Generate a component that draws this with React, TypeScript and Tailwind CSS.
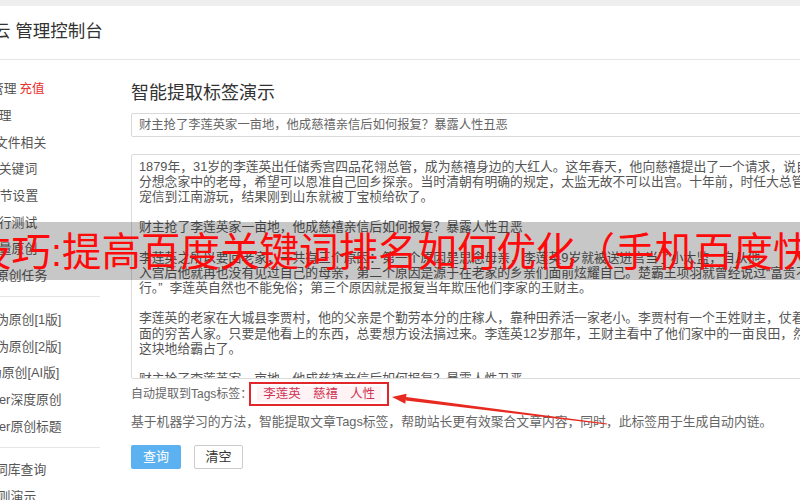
import React from 'react'

// 左侧菜单：文字左端被页面滚动裁掉，用负边距还原
const menuTop = [
  { text: '管理', ml: '-ml-[9px]', badge: '充值' },
  { text: '管理', ml: '-ml-[14px]' },
  { text: '文件相关', ml: '-ml-[5px]' },
  { text: '尾关键词', ml: '-ml-[14px]' },
  { text: '细节设置', ml: '-ml-[13px]' },
  { text: '运行测试', ml: '-ml-[14px]' },
  { text: '批量原创', ml: '-ml-[14px]' },
  { text: '原创任务', ml: '-ml-[4px]' },
]

const menuMid = [
  { text: '伪原创[1版]', ml: '-ml-[4px]' },
  { text: '伪原创[2版]', ml: '-ml-[4px]' },
  { text: '伪原创[AI版]', ml: '-ml-[11px]' },
  { text: 'er深度原创', ml: '-ml-[1px]' },
  { text: 'er原创标题', ml: '-ml-[1px]' },
]

const menuBottom = [
  { text: '词库查询', ml: '-ml-[5px]' },
  { text: '规则演示', ml: '-ml-[15px]' },
]

const article = [
  '1879年，31岁的李莲英出任储秀宫四品花翎总管，成为慈禧身边的大红人。这年春天，他向慈禧提出了一个请求，说自己十',
  '分想念家中的老母，希望可以恩准自己回乡探亲。当时清朝有明确的规定，太监无故不可以出宫。十年前，时任大总管安德海仗着慈禧的',
  '宠信到江南游玩，结果刚到山东就被丁宝桢给砍了。',
  '',
  '财主抢了李莲英家一亩地，他成慈禧亲信后如何报复？暴露人性丑恶',
  '',
  '李莲英之所以要回老家，一共有三个原因：第一个原因是思念母亲，李莲英9岁就被送进宫当了小太监，自从他',
  '入宫后他就再也没有见过自己的母亲，第二个原因是源于在老家的乡亲们面前炫耀自己。楚霸王项羽就曾经说过“富贵不归故乡，如衣绣夜',
  '行。”  李莲英自然也不能免俗；第三个原因就是报复当年欺压他们李家的王财主。',
  '',
  '李莲英的老家在大城县李贾村，他的父亲是个勤劳本分的庄稼人，靠种田养活一家老小。李贾村有一个王姓财主，仗着有钱有势欺负四',
  '面的穷苦人家。只要是他看上的东西，总要想方设法搞过来。李莲英12岁那年，王财主看中了他们家中的一亩良田，然后用手段把',
  '这块地给霸占了。',
  '',
  '财主抢了李莲英家一亩地，他成慈禧亲信后如何报复？暴露人性丑恶',
]

const MenuItem = ({ text, ml, badge }: { text: string; ml: string; badge?: string }) => (
  <div className="h-[26.7px] flex items-center whitespace-nowrap text-[12.8px] text-[#555]">
    <span className={ml}>{text}</span>
    {badge && <span className="ml-[3px] text-[12.5px] text-[#e8312f]">{badge}</span>}
  </div>
)

const App = () => {
  return (
    <div className="relative w-[800px] h-[500px] overflow-hidden bg-white font-[family-name:'Liberation_Sans','Noto_Sans_CJK_SC',sans-serif]">
      {/* 顶部灰条 */}
      <div className="h-[6px] bg-[#eeeeee]" />

      {/* 标题栏 */}
      <header className="h-[54px] border-b border-[#e6e6e6] flex items-center pb-[3px]">
        <span className="-ml-[7px] whitespace-nowrap text-[17.5px] text-[#333]">云 管理控制台</span>
      </header>

      <div className="flex">
        {/* 侧边菜单 */}
        <aside className="w-[100px] shrink-0 pt-[15.6px]">
          {menuTop.map((m) => (
            <MenuItem key={m.text + m.ml} {...m} />
          ))}
          <div className="mt-[6.5px] mb-[9.7px] h-px bg-[#e6e6e6]" />
          {menuMid.map((m) => (
            <MenuItem key={m.text} {...m} />
          ))}
          <div className="mt-[7px] mb-[9px] h-px bg-[#e6e6e6]" />
          {menuBottom.map((m) => (
            <MenuItem key={m.text} {...m} />
          ))}
        </aside>

        {/* 主内容 */}
        <main className="ml-[31px] w-[720px] shrink-0 pt-[21px]">
          <h2 className="text-[18px] leading-[24px] text-[#333] mb-[8px]">智能提取标签演示</h2>

          <div className="h-[24px] border border-[#d9d9d9] rounded-[2px] px-[7px] flex items-center whitespace-nowrap text-[12.3px] text-[#666]">
            财主抢了李莲英家一亩地，他成慈禧亲信后如何报复？暴露人性丑恶
          </div>

          <div className="mt-[17px] h-[225px] border border-[#dcdcdc] rounded-[2px] pl-[7px] pt-[3.5px] overflow-hidden text-[12.8px] leading-[15.2px] text-[#555]">
            {article.map((line, i) => (
              <div key={i} className="h-[15.2px] whitespace-pre">
                {line}
              </div>
            ))}
          </div>

          {/* 提取结果 */}
          <div className="mt-[3px] h-[24px] flex items-center whitespace-nowrap">
            <span className="text-[12px] text-[#666]">自动提取到Tags标签：</span>
            <div className="-ml-[3px] h-[24px] border-2 border-[#e3262a] px-[6px] flex items-center">
              {['李莲英', '慈禧', '人性'].map((t) => (
                <span key={t} className="px-[6px] leading-[16px] text-[12.5px] text-[#cf3453] bg-[#fff3f5]">
                  {t}
                </span>
              ))}
            </div>
          </div>

          <p className="mt-[8px] text-[12.8px] leading-[16px] text-[#666] whitespace-nowrap">
            基于机器学习的方法，智能提取文章Tags标签，帮助站长更有效聚合文章内容，同时，此标签用于生成自动内链。
          </p>

          <div className="mt-[15px] flex gap-[13px]">
            <button className="w-[50px] h-[24px] rounded-[2px] bg-[#5cb2f0] text-white text-[13px]">查询</button>
            <button className="w-[49px] h-[24px] rounded-[2px] border border-[#cccccc] bg-white text-[#333] text-[13px]">清空</button>
          </div>
        </main>
      </div>

      {/* 半透明水印条 */}
      <div className="absolute left-0 top-[222px] w-full h-[58px] bg-[rgba(0,0,0,0.22)] flex items-center overflow-hidden">
        <span className="-ml-[28px] whitespace-nowrap text-[39.5px] leading-none text-[#ff0a0a] font-[family-name:'Noto_Sans_CJK_SC',sans-serif]">
          技巧<span className="font-[family-name:'Liberation_Sans',sans-serif]">:</span>提高百度关键词排名如何优化（手机百度快照）
        </span>
      </div>

      {/* 红色箭头标注 */}
      <svg className="absolute left-[388px] top-[385px]" width="225" height="45" viewBox="0 0 225 45">
        <polygon points="4,12 17.3,18.7 18.5,8.8" fill="#e8291f" />
        <polygon points="17.7,15.5 18.1,12 219.1,38.4 218.9,39.6" fill="#e8291f" />
      </svg>
    </div>
  )
}

export default App
